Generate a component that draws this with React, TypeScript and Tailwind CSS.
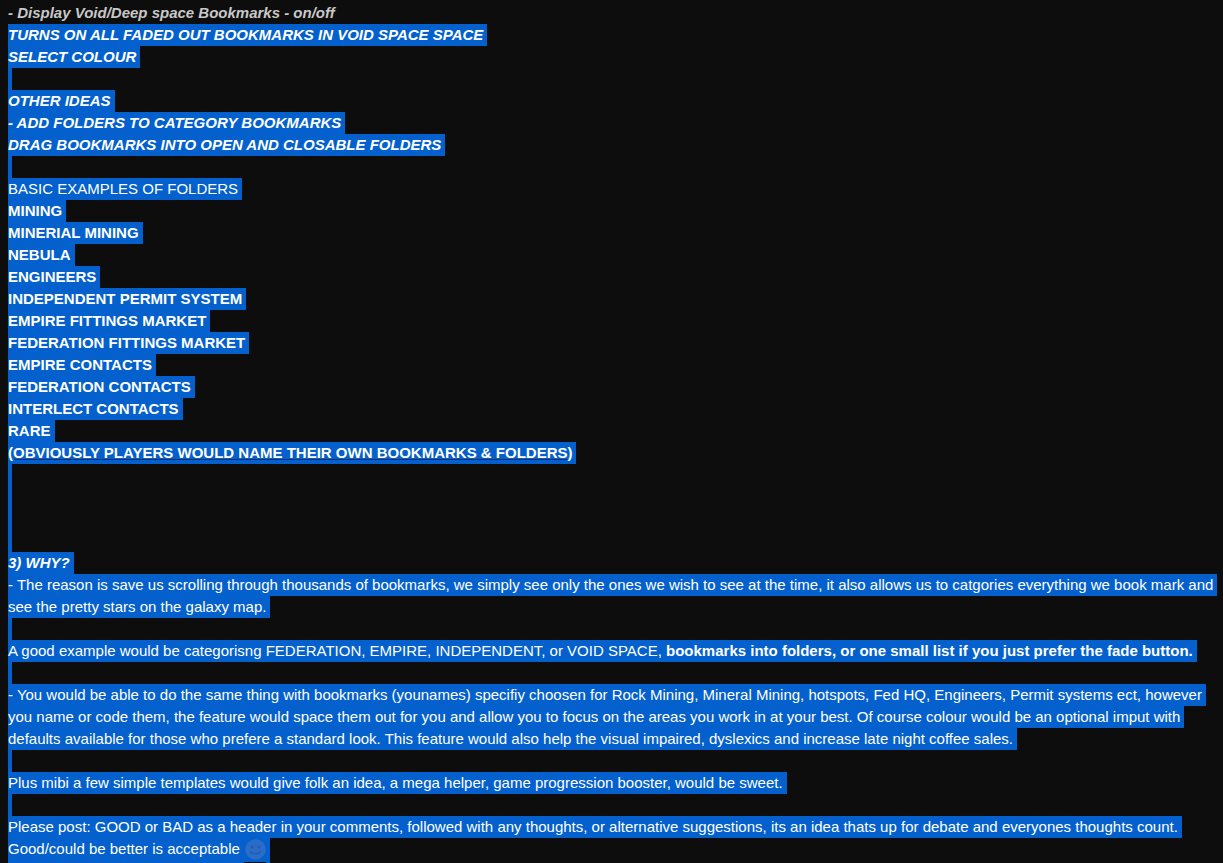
import React from "react";

const sel = "w-fit bg-[#0360cc] pr-[4px] text-white";
const blank = "w-[4px] h-[22px] bg-[#0360cc]";

function Line({ children, className = "" }: { children: React.ReactNode; className?: string }) {
  return <div className={`${sel} ${className}`}>{children}</div>;
}
function Blank() {
  return <div className={blank} />;
}

const upperBold = [
  "MINING",
  "MINERIAL MINING",
  "NEBULA",
  "ENGINEERS",
  "INDEPENDENT PERMIT SYSTEM",
  "EMPIRE FITTINGS MARKET",
  "FEDERATION FITTINGS MARKET",
  "EMPIRE CONTACTS",
  "FEDERATION CONTACTS",
  "INTERLECT CONTACTS",
  "RARE",
];

export default function App() {
  return (
    <div className="h-[863px] overflow-hidden bg-[#0d0d0d] pl-2 pt-[2px] font-['Liberation_Sans',Arial,sans-serif] text-[15px] leading-[22px]">
      <div className="font-bold italic text-[#c8c8c8]">- Display Void/Deep space Bookmarks - on/off</div>
      <Line className="font-bold italic">TURNS ON ALL FADED OUT BOOKMARKS IN VOID SPACE SPACE</Line>
      <Line className="font-bold italic">SELECT COLOUR</Line>
      <Blank />
      <Line className="font-bold italic">OTHER IDEAS</Line>
      <Line className="font-bold italic">- ADD FOLDERS TO CATEGORY BOOKMARKS</Line>
      <Line className="font-bold italic">DRAG BOOKMARKS INTO OPEN AND CLOSABLE FOLDERS</Line>
      <Blank />
      <Line>BASIC EXAMPLES OF FOLDERS</Line>
      {upperBold.map((t) => (
        <Line key={t} className="font-bold">{t}</Line>
      ))}
      <Line className="font-bold">
        <span className="underline decoration-[#0b2f66]">(OBVIOUSLY PLAYERS WOULD NAME THEIR OWN BOOKMARKS &amp; FOLDERS)</span>
      </Line>
      <Blank />
      <Blank />
      <Blank />
      <Blank />
      <Line className="font-bold italic">3) WHY?</Line>
      <Line>- The reason is save us scrolling through thousands of bookmarks, we simply see only the ones we wish to see at the time, it also allows us to catgories everything we book mark and</Line>
      <Line>see the pretty stars on the galaxy map.</Line>
      <Blank />
      <Line>
        A good example would be categorisng FEDERATION, EMPIRE, INDEPENDENT, or VOID SPACE,{" "}
        <b>bookmarks into folders, or one small list if you just prefer the fade button.</b>
      </Line>
      <Blank />
      <Line>- You would be able to do the same thing with bookmarks (younames) specifiy choosen for Rock Mining, Mineral Mining, hotspots, Fed HQ, Engineers, Permit systems ect, however</Line>
      <Line>you name or code them, the feature would space them out for you and allow you to focus on the areas you work in at your best. Of course colour would be an optional imput with</Line>
      <Line>defaults available for those who prefere a standard look. This feature would also help the visual impaired, dyslexics and increase late night coffee sales.</Line>
      <Blank />
      <Line>Plus mibi a few simple templates would give folk an idea, a mega helper, game progression booster, would be sweet.</Line>
      <Blank />
      <Line>Please post: GOOD or BAD as a header in your comments, followed with any thoughts, or alternative suggestions, its an idea thats up for debate and everyones thoughts count.</Line>
      <div className="flex w-fit items-start text-white">
        <span className="h-[25px] w-[236px] bg-[#0360cc]">Good/could be better is acceptable</span>
        <span className="h-[24px] w-[22px] bg-[#0360cc] pt-px">
          <svg width="21" height="21" viewBox="0 0 21 21" aria-hidden="true" className="ml-px">
            <circle cx="10.5" cy="10.5" r="10.3" fill="#2a6cc6" />
            <circle cx="7" cy="8" r="1.2" fill="#1a5cb8" />
            <circle cx="14" cy="8" r="1.2" fill="#1a5cb8" />
            <path d="M5.5 12.5c1.5 3 8.5 3 10 0" fill="none" stroke="#1a5cb8" strokeWidth="1.2" strokeLinecap="round" />
          </svg>
        </span>
        <span className="h-[25px] w-[4px] bg-[#0360cc]" />
      </div>
    </div>
  );
}
